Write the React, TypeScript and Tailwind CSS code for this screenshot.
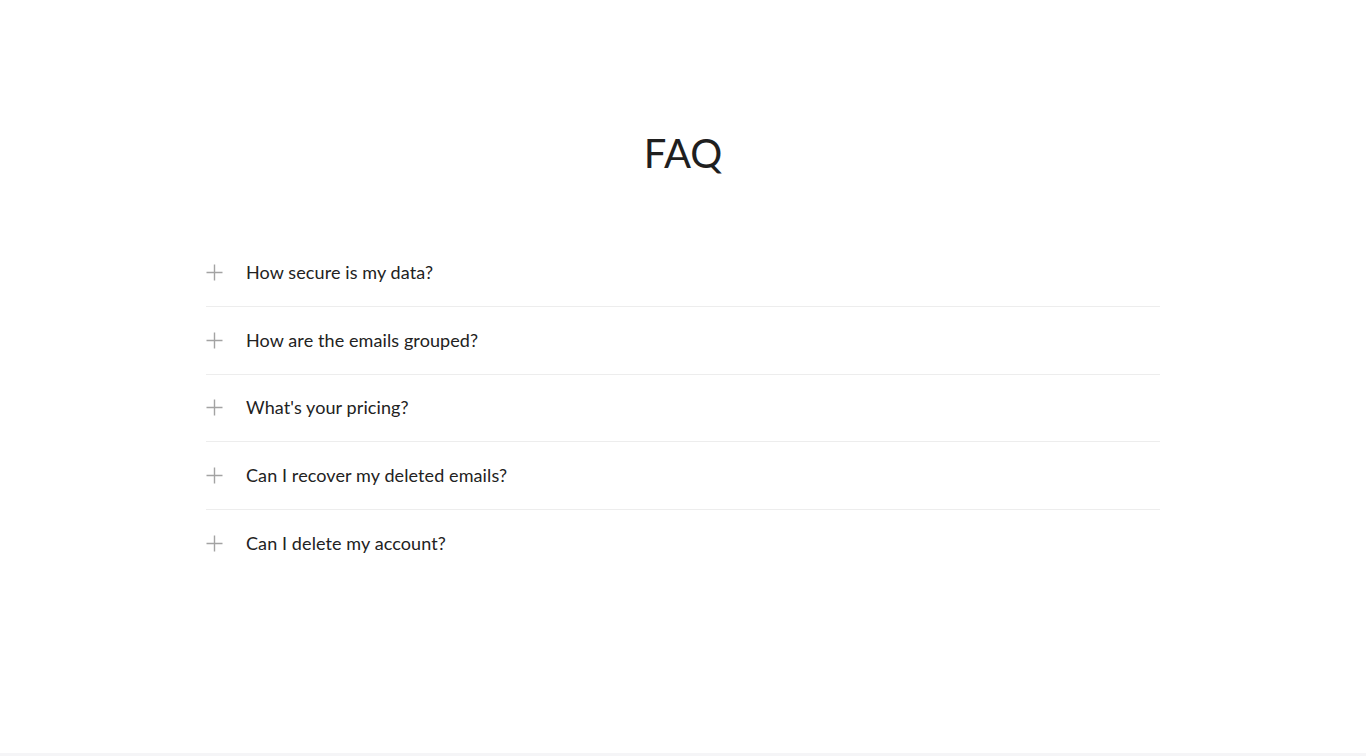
const QUESTIONS = [
  'How secure is my data?',
  'How are the emails grouped?',
  "What's your pricing?",
  'Can I recover my deleted emails?',
  'Can I delete my account?',
];

function PlusIcon() {
  return (
    <svg width="17" height="17" viewBox="0 0 17 17" fill="none" className="shrink-0">
      <path d="M8.5 0.5v16M0.5 8.5h16" stroke="#a3a3a3" strokeWidth="1.4" />
    </svg>
  );
}

export default function App() {
  return (
    <div
      className="min-h-[756px] bg-white flex flex-col"
      style={{ fontFamily: 'Lato, "Noto Sans", Arial, sans-serif' }}
    >
      <main className="flex-1 pt-[125px]">
        <h1 className="text-center text-[40px] leading-[56px] font-normal text-[#1f1f1f]">FAQ</h1>
        <div className="w-[954px] mx-auto mt-[58.5px]">
          {QUESTIONS.map((q, i) => (
            <button
              key={q}
              className={`w-full h-[67.5px] flex items-center text-left ${
                i < QUESTIONS.length - 1 ? 'border-b border-[#ededed]' : ''
              }`}
            >
              <PlusIcon />
              <span className="ml-[23px] text-[18px] text-[#222] tracking-[0.1px]">{q}</span>
            </button>
          ))}
        </div>
      </main>
      <div className="h-[3px] bg-[#f5f5f7]" />
    </div>
  );
}
